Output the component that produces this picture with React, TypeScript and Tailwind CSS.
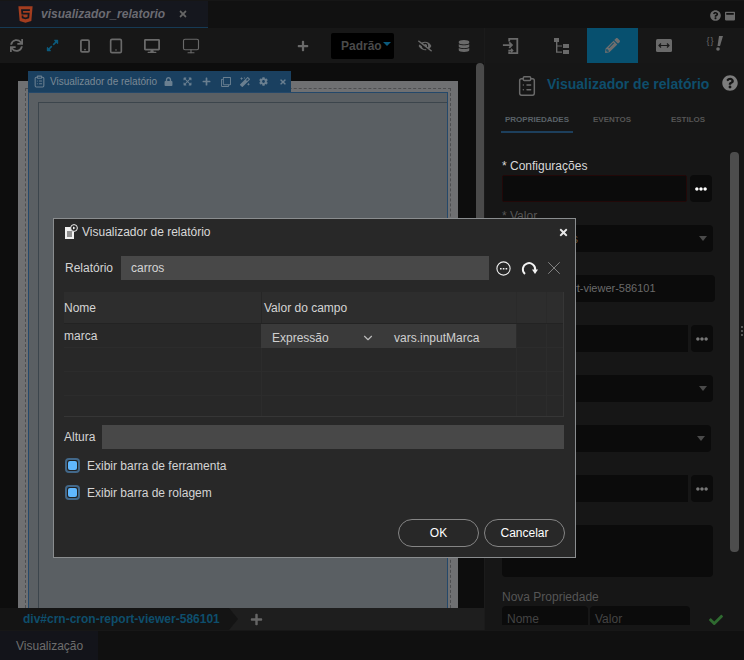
import React from 'react';
import { ChevronDown, ClipboardList, Monitor, Smartphone, Tablet, X } from 'lucide-react';
import {
  FaCheck, FaCog, FaDatabase, FaDesktop, FaEllipsisH, FaExpandAlt, FaExpandArrowsAlt, FaEyeSlash,
  FaHtml5, FaLock, FaMagic, FaPencilAlt, FaPlus, FaQuestionCircle, FaRegClone,
  FaSync, FaTimes, FaWindowMaximize,
} from 'react-icons/fa';

const font = { fontFamily: '"Liberation Sans", Arial, sans-serif' };

function ExitIcon() {
  return (
    <svg width="18" height="18" viewBox="0 0 20 20" fill="none" stroke="#6a6a6a" strokeWidth="2">
      <path d="M8 5V2h9v16H8v-2" />
      <path d="M1 9h10M8 6l3 3-3 3" />
      <path d="M7 15h5M10 13l2 2-2 2" strokeWidth="1.4" />
    </svg>
  );
}

function TreeIcon() {
  return (
    <svg width="16" height="16" viewBox="0 0 16 16" fill="#6a6a6a">
      <rect x="0" y="0" width="5" height="4" />
      <rect x="9" y="6" width="6" height="4" />
      <rect x="9" y="12" width="6" height="4" />
      <path d="M2 4h1.4v3.4H8v1.2H3.4v5H8v1.2H2z" />
    </svg>
  );
}

function ResizeIcon() {
  return (
    <svg width="16" height="13" viewBox="0 0 16 13">
      <rect width="16" height="13" rx="1.5" fill="#6a6a6a" />
      <path d="M3 6.5h10M5 4.5l-2 2 2 2M11 4.5l2 2-2 2" stroke="#1a1a1a" strokeWidth="1.2" fill="none" />
    </svg>
  );
}

function CodeAlertIcon() {
  return (
    <div className="flex items-start gap-[1px] text-[#6a6a6a] mb-[4px]">
      <span className="text-[9px] leading-[10px] tracking-[1px]">{'{}'}</span>
      <svg width="7" height="15" viewBox="0 0 7 15" fill="#6a6a6a">
        <path d="M3 0h4L4 10H1.5z" />
        <circle cx="2" cy="13" r="1.8" />
      </svg>
    </div>
  );
}

function ReportIcon() {
  return (
    <svg width="14" height="16" viewBox="0 0 14 16">
      <path d="M1 3h7l2 2v10H1z" fill="#f0f0f0" />
      <path d="M3 8h5M3 10h5M3 12h5" stroke="#333" strokeWidth="1" />
      <circle cx="10" cy="4" r="3.4" fill="#282828" stroke="#f0f0f0" strokeWidth="1" />
      <path d="M9 2.5l2.4 1.5L9 5.5z" fill="#f0f0f0" />
    </svg>
  );
}

function DotsCircleIcon() {
  return (
    <svg width="15" height="15" viewBox="0 0 15 15" fill="none">
      <circle cx="7.5" cy="7.5" r="6.6" stroke="#f0f0f0" strokeWidth="1.1" />
      <path d="M4 7h1.6v1.6H4zM6.8 7h1.6v1.6H6.8zM9.6 7h1.6v1.6H9.6z" fill="#f0f0f0" />
    </svg>
  );
}

function RedoIcon() {
  return (
    <svg width="17" height="17" viewBox="0 0 17 17" fill="none">
      <path d="M4 14A6.2 6.2 0 1 1 14.2 10" stroke="#f4f4f4" strokeWidth="1.9" />
      <path d="M11 9.6h6L14 14z" fill="#f4f4f4" />
    </svg>
  );
}

function Caret() {
  return <div className="w-0 h-0 border-x-[4px] border-x-transparent border-t-[5px] border-t-[#4a4a4a]" />;
}

function MoreButton({ bright }: { bright?: boolean }) {
  return (
    <button className={`ml-[3px] w-[22px] h-[27px] rounded bg-[#0b0b0b] flex items-center justify-center ${bright ? 'text-white' : 'text-[#777]'}`}>
      <FaEllipsisH size={12} />
    </button>
  );
}

function Field({ label, labelClass, children }: { label?: string; labelClass?: string; children: React.ReactNode }) {
  return (
    <div className="h-[50px] shrink-0">
      <div className={`h-[23px] flex items-end pb-[2px] text-[12px] leading-[14px] ${labelClass ?? 'text-[#555]'}`}>{label}</div>
      <div className="flex h-[27px]">{children}</div>
    </div>
  );
}

function SelectBox({ width, value }: { width: string; value?: string }) {
  return (
    <div className={`${width} h-[27px] rounded bg-[#0b0b0b] flex items-center justify-between pl-[14px] pr-[6px]`}>
      <span className="text-[12px] text-[#6b5330]">{value}</span>
      <Caret />
    </div>
  );
}

function CheckRow({ label }: { label: string }) {
  return (
    <label className="flex items-center h-[15px] pl-[1px]">
      <span className="w-[15px] h-[15px] rounded-[4px] border-2 border-[#42688a] bg-[#222] flex items-center justify-center">
        <span className="w-[9px] h-[9px] rounded-[2px] bg-[#60b8ff] block" />
      </span>
      <span className="ml-[7px] text-[12px] text-[#d4d4d4]">{label}</span>
    </label>
  );
}

const tbarIcon = 'text-[#6a7f90]';

export default function App() {
  const rows = [0, 1, 2, 3];
  const toolbarIcons = [
    <FaLock size={9} />,
    <FaExpandArrowsAlt size={9} />,
    <FaPlus size={9} />,
    <FaRegClone size={10} />,
    <FaMagic size={10} />,
    <FaCog size={9} />,
    <FaTimes size={8} />,
  ];
  return (
    <div className="relative w-[744px] h-[660px] overflow-hidden bg-[#111] flex flex-col" style={font}>
      {/* abas */}
      <div className="h-[28px] shrink-0 flex bg-[#111] border-t border-[#161616]">
        <div className="w-[208px] h-[27px] bg-[#15171e] border-b border-[#163a55] flex items-center pl-[16px]">
          <FaHtml5 size={19} className="text-[#a33d1f]" />
          <span className="ml-[6px] text-[12px] italic font-bold text-[#6b6b72]">visualizador_relatorio</span>
          <FaTimes size={10} className="ml-[13px] text-[#666]" />
        </div>
        <div className="flex-1 flex items-center justify-end pr-[9px] gap-[4px] text-[#6a6a6a] pt-[2px]">
          <FaQuestionCircle size={11} />
          <FaWindowMaximize size={10} />
        </div>
      </div>

      <div className="flex-1 flex min-h-0">
        {/* coluna do editor */}
        <div className="w-[485px] shrink-0 flex flex-col border-r border-[#1b1b1b]">
          <div className="h-[35px] shrink-0 bg-[#171717] relative flex items-center text-[#6a6a6a]">
            <div className="flex items-center pl-[10px]">
              <FaSync size={13} />
              <FaExpandAlt size={13} className="ml-[23px] text-[#0b5a7c]" />
              <Smartphone size={14} strokeWidth={3} className="ml-[19px]" />
              <Tablet size={16} strokeWidth={2.5} className="ml-[16px]" />
              <FaDesktop size={16} className="ml-[20px]" />
              <Monitor size={18} strokeWidth={1.5} className="ml-[22px]" />
              <FaPlus size={12} className="ml-[97px]" />
            </div>
            <div className="ml-[22px] w-[63px] h-[26px] rounded-[2px] bg-black flex items-center pl-[10px] text-[12px] font-bold text-[#4a4a4a]">
              Padrão
              <span className="ml-[1px] mb-[3px] w-0 h-0 border-x-[4px] border-x-transparent border-t-[4px] border-t-[#0b5a7c]" />
            </div>
            <FaEyeSlash size={14} className="ml-[24px]" />
            <FaDatabase size={12} className="ml-[26px]" />
          </div>

          <div className="flex-1 min-h-0 relative bg-[#0d0d0d] flex flex-col pt-[18px] pl-[18px]">
            <div className="flex-1 w-[440px] bg-[#6f7072] flex flex-col pt-[7px] pl-[7px] pr-[7px]">
              <div className="flex-1 border border-b-0 border-dashed border-[#4d4e50] pt-[3px] pl-[2px] pr-[2px] flex flex-col">
                <div className="flex-1 bg-[#5a5f63] border border-b-0 border-[#24486a] pl-[9px] pt-[9px] flex flex-col">
                  <div className="flex-1 border-l border-t border-[#3c454c]" />
                </div>
              </div>
            </div>

            {/* barra do componente selecionado */}
            <div className="absolute left-[28px] top-[8px] w-[263px] h-[21px] bg-[#1a4060] flex items-center pl-[5px] text-[#7f8f9c]">
              <ClipboardList size={13} className={`${tbarIcon} shrink-0`} />
              <span className="ml-[4px] text-[10px] text-[#7a8995] whitespace-nowrap">Visualizador de relatório</span>
              <div className={`ml-[2px] flex items-center ${tbarIcon}`}>
                {toolbarIcons.map((icon, i) => (
                  <span key={i} className="w-[19px] flex justify-center shrink-0">{icon}</span>
                ))}
              </div>
            </div>

            <div className="absolute left-[476px] top-0 w-[8px] h-[440px] rounded bg-[#4a4a4a]" />
          </div>

          <div className="h-[22px] shrink-0 bg-[#1e1e1e] flex items-center">
            <div className="h-[22px] w-[238px] bg-[#141414] [clip-path:polygon(0_0,229px_0,238px_50%,229px_100%,0_100%)] flex items-center pl-[23px] text-[12px] font-bold text-[#0e4e6c] whitespace-nowrap">
              div#crn-cron-report-viewer-586101
            </div>
            <FaPlus size={13} className="ml-[12px] text-[#666]" />
          </div>
        </div>

        {/* painel de propriedades */}
        <div className="relative flex-1 bg-[#161616] flex flex-col overflow-hidden">
          <div className="h-[35px] shrink-0 grid grid-cols-[51px_51px_51px_51px_51px] bg-[#171717]">
            <div className="flex items-center justify-center"><ExitIcon /></div>
            <div className="flex items-center justify-center"><TreeIcon /></div>
            <div className="flex items-center justify-center bg-[#07506f] text-[#6e6e6e]"><FaPencilAlt size={15} /></div>
            <div className="flex items-center justify-center"><ResizeIcon /></div>
            <div className="flex items-center justify-center"><CodeAlertIcon /></div>
          </div>

          <div className="h-[42px] shrink-0 flex items-center pl-[31px]">
            <ClipboardList size={22} strokeWidth={1.6} className="text-[#6a6a6a] mt-[3px] shrink-0" />
            <span className="ml-[9px] text-[14px] leading-[18px] font-bold text-[#0e4e6c] whitespace-nowrap">Visualizador de relatório</span>
            <FaQuestionCircle size={16} className="ml-[13px] mb-[3px] text-[#7d7d7d] shrink-0" />
          </div>

          <div className="h-[27px] shrink-0 ml-[16px] flex text-[8px] font-bold text-[#555]">
            <div className="w-[72px] h-[28px] pt-[3px] flex items-center justify-center border-b-2 border-[#1d3f5c] text-[#5a6268]">PROPRIEDADES</div>
            <div className="w-[78px] h-[25px] pt-[5px] flex items-center justify-center">EVENTOS</div>
            <div className="w-[74px] h-[25px] pt-[5px] flex items-center justify-center">ESTILOS</div>
          </div>

          <div className="flex-1 min-h-0 overflow-hidden pl-[17px] pt-[20px]">
            <Field label="* Configurações" labelClass="text-[#d8d8d8]">
              <div className="w-[185px] h-[27px] bg-[#0b0b0b] border border-[#220808] rounded-[2px]" />
              <MoreButton bright />
            </Field>
            <Field label="* Valor">
              <SelectBox width="w-[211px]" value="Parâmetros" />
            </Field>
            <Field label="ID">
              <div className="w-[213px] h-[27px] rounded bg-[#0b0b0b] flex items-center pl-[5px] text-[11px] text-[#6a6a6a] whitespace-nowrap">crn-cron-report-viewer-586101</div>
            </Field>
            <Field label="Classe">
              <div className="w-[186px] h-[27px] bg-[#0b0b0b]" />
              <MoreButton />
            </Field>
            <Field label="Alinhamento">
              <SelectBox width="w-[211px]" />
            </Field>
            <Field label="Visível">
              <SelectBox width="w-[209px]" />
            </Field>
            <Field label="Estilo">
              <div className="w-[186px] h-[27px] bg-[#0b0b0b]" />
              <MoreButton />
            </Field>
            <div className="h-[75px] shrink-0 pt-[23px]">
              <div className="w-[211px] h-[52px] rounded bg-[#0b0b0b]" />
            </div>
            <div className="text-[12px] leading-[14px] text-[#555] mt-[13px]">Nova Propriedade</div>
            <div className="flex items-start mt-[2px]">
              <div className="w-[86px] h-[19px] rounded-t bg-[#0b0b0b] pl-[5px] pt-[7px] text-[12px] leading-[12px] text-[#444]">Nome</div>
              <div className="ml-[2px] w-[100px] h-[19px] rounded-t bg-[#0b0b0b] pl-[5px] pt-[7px] text-[12px] leading-[12px] text-[#444]">Valor</div>
              <FaCheck size={14} className="ml-[19px] mt-[7px] text-[#2f6a30]" />
            </div>
          </div>
          <div className="h-[5px] shrink-0 bg-[#161616]" />

          <div className="absolute left-[245px] top-[124px] w-[9px] h-[400px] rounded bg-[#4d4d4d]" />
          <div className="absolute right-[1px] top-[298px] flex flex-col gap-[2px]">
            <span className="w-[2px] h-[2px] bg-[#555] block" />
            <span className="w-[2px] h-[2px] bg-[#555] block" />
            <span className="w-[2px] h-[2px] bg-[#555] block" />
          </div>
        </div>
      </div>

      {/* rodapé */}
      <div className="h-[30px] shrink-0 bg-[#101010] border-t border-[#171717] flex">
        <div className="w-[98px] bg-[#13141a] pl-[16px] pt-[6px] text-[12px] text-[#6e6e6e]">Visualização</div>
      </div>

      {/* diálogo */}
      <div className="absolute left-[53px] top-[218px] w-[523px] h-[340px] bg-[#282828] border border-[#8a8d8f] flex flex-col text-[12px] text-[#d4d4d4] pl-[10px] pr-[10px]">
        <div className="h-[26px] shrink-0 flex items-center">
          <ReportIcon />
          <span className="ml-[4px] text-[#d8d8d8]">Visualizador de relatório</span>
          <FaTimes size={11} className="ml-auto -mr-[4px] text-[#e8e8e8]" />
        </div>

        <div className="mt-[11px] h-[24px] shrink-0 flex items-center">
          <span className="ml-[1px] w-[56px]">Relatório</span>
          <div className="w-[368px] h-[24px] bg-[#484848] flex items-center pl-[10px]">carros</div>
          <div className="ml-[7px]"><DotsCircleIcon /></div>
          <div className="ml-[10px]"><RedoIcon /></div>
          <X size={22} strokeWidth={1} className="ml-[5px] text-[#8a8a8a] shrink-0" />
        </div>

        <div className="mt-[12px] w-[500px] shrink-0 border-r border-b border-[#363636]">
          <div className="grid grid-cols-[197px_255px_30px_17px] h-[32px] bg-[#2d2d2d] border-b border-[#232323]">
            <div className="flex items-center">Nome</div>
            <div className="border-l border-[#262626] flex items-center pl-[2px]">Valor do campo</div>
            <div className="border-l border-[#2a2a2a]" />
            <div className="border-l border-[#2a2a2a]" />
          </div>
          {rows.map(r => (
            <div key={r} className={`grid grid-cols-[197px_255px_30px_17px] ${r === 3 ? 'h-[20px]' : 'h-[24px]'} ${r === 3 ? '' : 'border-b border-[#2c2c2c]'}`}>
              <div className="leading-[24px]">{r === 0 ? 'marca' : ''}</div>
              {r === 0 ? (
                <div className="bg-[#3a3a3a] flex items-center pl-[11px] pt-[3px] text-[#d0d0d0]">
                  <span className="w-[89px]">Expressão</span>
                  <ChevronDown size={14} className="text-[#bbb]" />
                  <span className="ml-[19px]">vars.inputMarca</span>
                </div>
              ) : (
                <div className="border-l border-[#2c2c2c]" />
              )}
              <div className="border-l border-[#2c2c2c]" />
              <div className="border-l border-[#2c2c2c]" />
            </div>
          ))}
        </div>

        <div className="mt-[8px] h-[24px] w-[500px] shrink-0 flex items-center">
          <span className="w-[38px] pb-[1px]">Altura</span>
          <div className="w-[462px] h-[24px] bg-[#484848]" />
        </div>

        <div className="mt-[9px] flex flex-col gap-[12px]">
          <CheckRow label="Exibir barra de ferramenta" />
          <CheckRow label="Exibir barra de rolagem" />
        </div>

        <div className="mt-[19px] flex justify-end gap-[5px]">
          <button className="w-[81px] h-[28px] rounded-full border border-[#858585] text-white font-medium">OK</button>
          <button className="w-[81px] h-[28px] rounded-full border border-[#858585] text-white font-medium">Cancelar</button>
        </div>
      </div>
    </div>
  );
}
